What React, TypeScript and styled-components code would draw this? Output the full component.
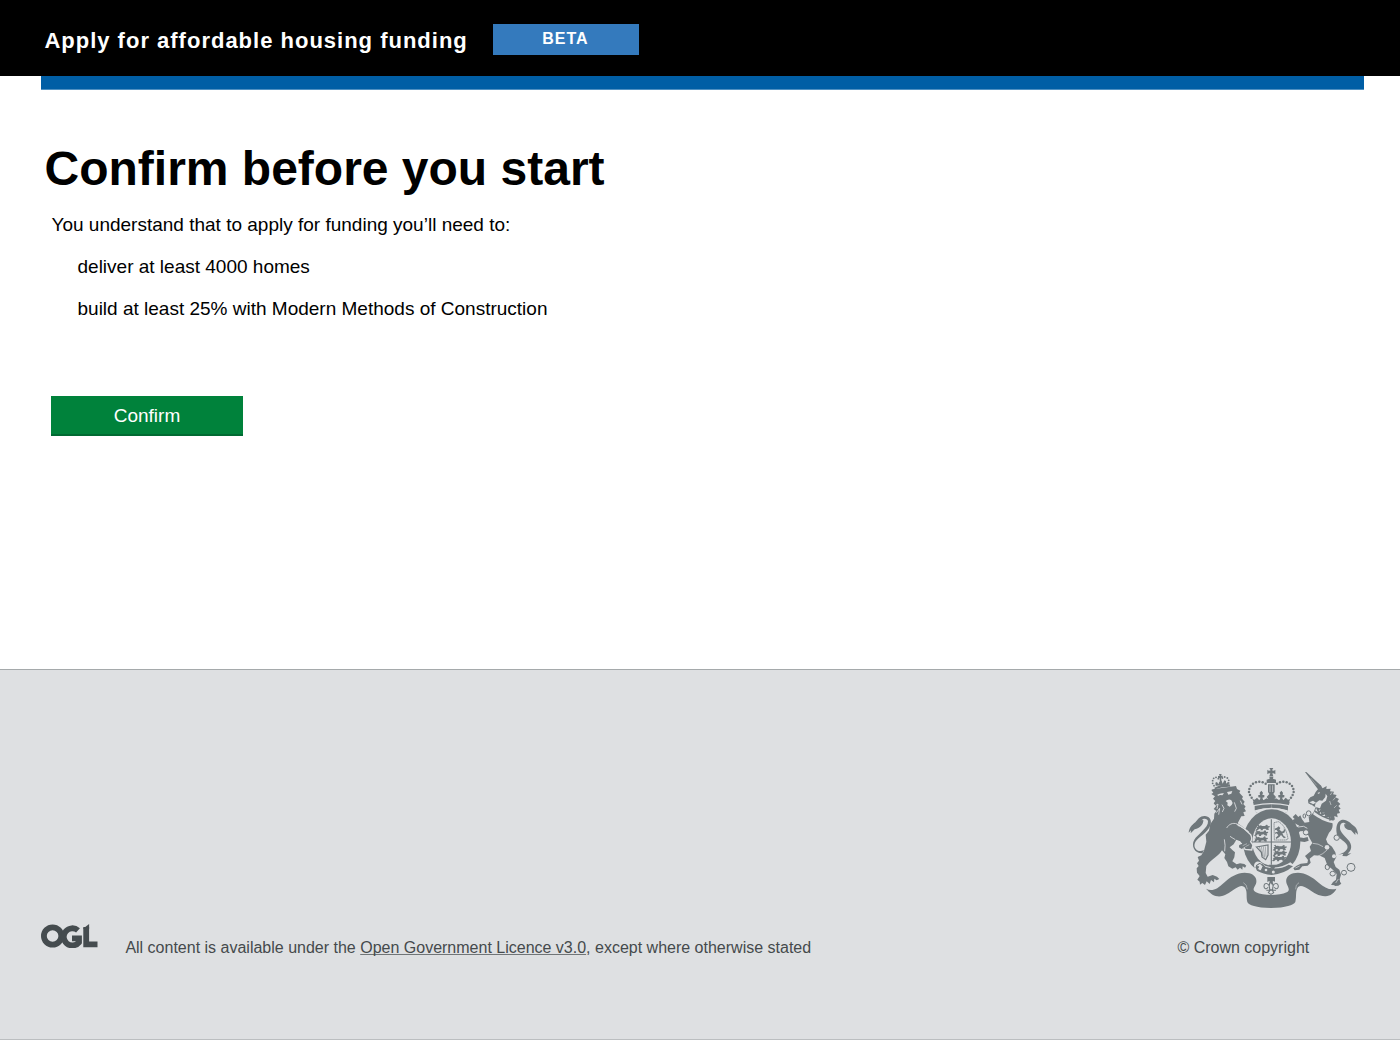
import React from "react";
import styled, { createGlobalStyle } from "styled-components";

const GlobalStyle = createGlobalStyle`
  *, *::before, *::after { box-sizing: border-box; }
  body {
    margin: 0;
    background: #ffffff;
    color: #000000;
    font-family: "Liberation Sans", Arial, Helvetica, sans-serif;
  }
`;

const Page = styled.div`
  display: flex;
  flex-direction: column;
  height: 1041px;
`;

const Header = styled.header`
  display: flex;
  align-items: flex-start;
  height: 76px;
  padding: 24px 0 0 44.4px;
  background: #000000;
  color: #ffffff;
`;

const ServiceName = styled.span`
  width: 448.6px;
  padding-top: 4px;
  font-size: 22px;
  line-height: 26px;
  font-weight: 700;
  letter-spacing: 1px;
  white-space: nowrap;
`;

const PhaseTag = styled.strong`
  width: 146px;
  height: 31px;
  padding-right: 1px;
  background: #347abd;
  font-size: 16px;
  line-height: 29px;
  letter-spacing: 1px;
  text-align: center;
`;

const BlueBar = styled.div`
  height: 14px;
  margin: 0 36px 0 41px;
  background: #005ea5;
  border-bottom: 1px solid #4f90c2;
`;

const Main = styled.main`
  flex: 1;
  padding: 51px 44.5px 0;
`;

const Title = styled.h1`
  margin: 0;
  font-size: 48px;
  line-height: 56px;
  font-weight: 700;
`;

const Intro = styled.p`
  margin: 17px 0 0 7px;
  font-size: 19px;
  line-height: 22px;
`;

const Requirements = styled.ul`
  display: flex;
  flex-direction: column;
  gap: 20px;
  margin: 20px 0 0 33px;
  padding: 0;
  list-style: none;
  font-size: 19px;
  line-height: 22px;
`;

const ConfirmButton = styled.button`
  display: block;
  width: 192px;
  height: 40px;
  margin: 76px 0 0 6.5px;
  padding: 1px 0 0;
  border: 0;
  border-bottom: 2px solid #006a32;
  background: #00823b;
  color: #ffffff;
  font-family: inherit;
  font-size: 19px;
  line-height: 37px;
`;

const Footer = styled.footer`
  display: flex;
  align-items: flex-end;
  height: 371px;
  margin-bottom: 1px;
  padding: 0 0 82px 41px;
  border-top: 1px solid #a5a9ab;
  border-bottom: 1px solid #bbbec0;
  background: #dee0e2;
  color: #454a4c;
  font-size: 16px;
  line-height: 18px;
`;

const Licence = styled.p`
  flex: 1;
  margin: 0 0 0 27.4px;
`;

const LicenceLink = styled.a`
  color: inherit;
  text-decoration: underline;
  text-decoration-color: #707577;
  text-decoration-thickness: 1px;
  text-underline-offset: 1px;
  text-decoration-skip-ink: none;
`;

const Copyright = styled.div`
  display: flex;
  flex-direction: column;
  width: 222.6px;
  gap: 24px;
`;

const LogoSvg = styled.svg`
  display: block;
  flex: none;
  margin-bottom: 9px;
`;

const CrestSvg = styled.svg`
  display: block;
  margin-left: 2.6px;
`;

const INK = "#6f777b";
const PAPER = "#dee0e2";

function OglLogo() {
  return (
    <LogoSvg width="57" height="24" viewBox="0 0 57 24" fill="none" aria-label="Open Government Licence">
      <g stroke="#454c4f" strokeWidth="5.8">
        <circle cx="11.6" cy="12" r="8.7" />
        <path d="M37 6.4A8.6 8.6 0 1 0 38 18.3V14.4H31" />
        <path d="M45.2 3V20.4H56.5" />
      </g>
      <path d="M42.3 4.6L48.1 0V5H42.3Z" fill="#454c4f" />
    </LogoSvg>
  );
}

const imperialArch = [
  [248, 67], [238, 65], [228, 67], [219, 71], [212, 78], [208, 87], [207, 96], [210, 105], [215, 113], [257, 71],
];
const smallCrownPearls = [
  [98, 62], [98, 70], [102, 77], [101, 55], [108, 52], [115, 56], [127, 54], [134, 51], [142, 54], [146, 61], [146, 69],
];

/* A passant lion as used in the quarters of the shield. */
function TinyLion({ x, y }: { x: number; y: number }) {
  return (
    <path
      transform={`translate(${x} ${y})`}
      d="M0 0l5-3 3 4 5-1 3 2h9l4-4 4 1v4l5-1 2 3-6 3 3 3-2 3-6-1-3-3-7 1-1 4h-7l2-4-5-1-5 5-6-1 5-6-3-3 6-1-2-3z"
    />
  );
}

function Crest() {
  return (
    <CrestSvg width="185" height="155" viewBox="0 0 555 465" fill={INK} aria-label="Royal coat of arms">
      {/* Motto ribbon */}
      <path d="M78 386C96 396 112 387 132 368C154 348 180 333 208 340C226 345 232 358 228 371C224 382 214 388 228 397C249 408 298 408 320 397C332 390 324 382 320 371C315 357 323 345 340 340C368 333 394 349 416 368C434 383 450 392 469 386C463 400 451 407 437 409C418 410 401 398 386 388C372 379 358 373 352 385C346 397 350 410 346 426C340 436 318 443 273 444C228 443 206 436 202 426C198 410 202 398 197 387C190 373 178 378 163 388C147 399 132 411 112 409C98 407 88 397 78 386Z" />
      <path d="M190 368Q201 373 202 388M357 368Q346 373 347 388" fill="none" stroke={PAPER} strokeWidth="1.5" />

      {/* Lion */}
      <path d="M98 88L168 78L171 87L181 92L178 98L189 110L186 116L194 125L190 132L197 140L193 145L198 154L190 157L194 168L184 169L173 190C188 199 195 208 207 219L212 232L206 249L211 256L207 263L202 258L198 266L193 260L186 266L184 260L177 262L178 255L188 252L181 244L169 239L161 253L149 262L157 270L165 277L163 292L157 304L170 313L180 310L193 312L199 317L195 323L188 319L187 329L180 323L173 329L167 322L157 326L145 319L141 306L133 294L136 283L126 271C118 285 99 297 87 308L79 318L77 339L83 350L98 345L111 350L118 357L110 361L103 356L102 367L93 360L89 372L80 364L75 375L67 369L60 374L59 365L52 359L59 348L51 338L50 325L56 318L51 310L57 302L53 291L64 286L72 272L79 245L77 224L87 212L91 192L102 176L103 161L109 153L101 147L108 139L101 130L106 123L99 116L105 109L94 102L100 98L94 90Z" />
      <g fill={PAPER}>
        <path d="M112 104Q121 98 132 100L127 106Q119 104 114 108Z" />
        <path d="M141 96L157 93L154 101L145 104Z" />
        <path d="M142 120Q148 116 154 121L158 129Q155 138 149 140L142 136L143 128L137 123Z" />
      </g>
      <g fill="none" stroke={PAPER} strokeWidth="2.5">
        <path d="M106 137L114 132L111 147M109 158L119 145L116 164M126 134L132 145L127 156M181 122L186 133M163 127L169 145L164 155" />
        <path d="M133 238Q137 256 134 274M171 192C158 187 146 193 140 204M150 229Q159 235 166 239" />
      </g>
      <path d="M72 270C55 280 40 265 44 251C48 236 73 225 87 204C98 187 93 170 75 168C61 167 53 178 46 187C35 196 27 204 26 218L33 211L32 220L44 208C60 204 71 193 70 180L64 181C70 173 83 175 84 184C86 203 51 225 43 239C32 257 44 281 67 280Z" />

      {/* Lion's crown */}
      <path d="M103 83Q126 71 149 73L151 80Q125 79 105 88Z" />
      <g fill={INK}>
        {smallCrownPearls.map(([x, y]) => <circle key={`${x}-${y}`} cx={x} cy={y} r="2.8" />)}
      </g>
      <path d="M117 42H125L123 47H128V53H123L126 72H120L119 54H114V48H119ZM107 77L106 68L111 66L115 73L118 65L125 63L128 71L133 61L138 63L138 71L143 66L145 75Z" />

      {/* Imperial crown */}
      {[1, -1].map((side) => (
        <g key={side} transform={side === 1 ? undefined : "translate(548 0) scale(-1 1)"}>
          {imperialArch.map(([x, y]) => <circle key={`${x}-${y}`} cx={x} cy={y} r="3.7" />)}
          <path d="M222 128L217 117L224 119L231 113L238 121L242 113L235 112V105L240 105L239 98L244 92L249 98L247 105L253 105V112L247 113L250 121L260 115L269 120V128Z" />
          <path d="M224 138Q222 150 229 160C241 149 259 147 274 147V133Q245 133 224 138Z" />
        </g>
      ))}
      <path d="M268 24H280L276 31Q282 34 286 29V43Q281 38 277 40L280 49H268L271 40Q266 38 262 43V29Q266 34 272 31ZM268 50H280L279 56L288 59V69H260V59L269 56Z" />
      <path d="M264 73H284V96L280 102L288 111L283 118L288 124H260L265 118L260 111L268 102L264 96Z" />
      <path d="M270 76V96M278 76V96" stroke={PAPER} strokeWidth="2" />
      <path d="M220 130Q274 118 328 130" fill="none" stroke={INK} strokeWidth="10" />
      <path d="M230 154Q274 139 318 154" fill="none" stroke={PAPER} strokeWidth="7" />
      <path d="M226 159Q274 144 322 159L323 151Q274 137 225 151Z" fill={PAPER} />

      {/* Garter and shield */}
      <ellipse cx="275" cy="246" rx="86" ry="98" />
      <ellipse cx="275" cy="246" rx="58" ry="71" fill={PAPER} />
      <path d="M274 178V314M216 246H333" stroke={INK} strokeWidth="3.4" />
      <TinyLion x={230} y={196} /><TinyLion x={225} y={213} /><TinyLion x={224} y={231} />
      <TinyLion x={281} y={257} /><TinyLion x={281} y={273} /><TinyLion x={279} y={289} />
      <path d="M282 188L295 185Q318 197 324 237L318 240H283Z" fill="none" stroke={INK} strokeWidth="2.2" strokeDasharray="5 1" />
      <path d="M291 203L296 199L301 204L298 209L306 215L312 211L311 205L316 211L313 218L307 220L311 228L318 232L312 235L303 225L298 231L289 237L287 233L295 226L290 220L285 222L286 217L294 215L289 209L284 211L286 205Z" />
      <path d="M229 261L264 255V285L257 299L246 291L244 277Z" fill="none" stroke={INK} strokeWidth="3.5" />
      <path d="M238 261L248 288M244 260L250 291M250 259L254 293M256 259L258 290" stroke={INK} strokeWidth="1.5" />

      {/* Buckle and strap */}
      <path d="M222 316Q226 300 242 307L257 318L275 322Q304 325 331 307L345 318Q318 348 274 349Q244 347 225 333Z" fill={PAPER} />
      <path d="M238 309Q250 311 257 321L275 325Q302 328 326 314L339 319Q313 342 275 345Q249 342 231 332L226 321Z" />
      <path d="M266 314H288L282 328L274 326Z" />
      <path d="M240 310L249 319L243 333L232 328L236 320L228 317Z" fill={PAPER} stroke={INK} strokeWidth="3" />
      <circle cx="258" cy="330" r="4" fill={PAPER} /><circle cx="280" cy="336" r="4.5" fill={PAPER} />

      {/* Pendant and lily */}
      <path d="M262 351H285V365L279 363L274 374L268 363L262 366Z" />
      <g fill="none" stroke={INK} strokeWidth="3.2">
        <path d="M273 362Q264 375 270 389H277Q283 374 273 362ZM269 389C270 368 252 365 252 379C252 386 259 390 264 382M278 389C277 368 294 365 295 379C295 386 288 390 283 382M259 391H288M270 391L265 398L273 403L281 398L277 391" />
      </g>

      {/* Lion's forepaw over the garter */}
      <path d="M172 193C190 202 202 215 212 224Q218 236 212 245L219 255L215 270L195 268L193 260" fill="none" stroke={PAPER} strokeWidth="4" />
      <path d="M165 192C184 200 199 215 209 226Q213 236 206 245L213 255L210 266L203 259L199 267L192 260L185 267L177 262L179 255L188 252L180 242L165 235Z" />
      <path d="M170 193Q190 204 206 215M191 184Q185 193 176 198" fill="none" stroke={PAPER} strokeWidth="3" />
      <path d="M188 257L201 251M196 260L208 254" stroke={PAPER} strokeWidth="1.5" />

      {/* Unicorn */}
      <path d="M375 36L379 36L425 79L415 89Z" />
      <path d="M392 54L410 76" stroke={PAPER} strokeWidth="1" />
      <path d="M416 85L421 76L428 85L440 78L439 87L452 86L450 94L462 95L459 103L470 105L466 112L477 117L472 124L481 132L475 138L482 146L476 149L480 159L471 161L473 172L463 168L464 180L454 177C462 198 457 209 447 218L438 238L443 250L456 260L466 277L469 291L461 306L467 321L478 329L483 344L479 358L481 370L468 376L453 375L459 366L468 359L470 342L456 327L442 316L434 294L420 287L402 286L389 296L392 308L383 317L367 319L358 329L344 331L340 325L350 317L362 311L382 309L384 300L375 288L393 273L389 260L397 249L389 235L383 222L376 213L360 214L352 223L358 232L371 234L383 231L386 242L374 246L357 244L341 228L340 216L348 204L358 197L341 188L338 180L344 177L338 171L347 162L355 171L361 166L366 178L374 188L388 186L386 171L400 158L407 142L403 131L393 134L385 130L384 120L391 112L401 107L407 96Z" />
      <g fill={PAPER}>
        <path d="M388 127L399 122L408 128L418 121L427 122L436 111L437 101L442 109L438 122L425 131L420 145L408 142L400 133Z" />
        <path d="M412 99L420 96L417 102Z" />
        <circle cx="441" cy="262" r="7" /><circle cx="462" cy="289" r="6" />
      </g>
      <path d="M393 133Q402 133 407 128L404 141" />
      <g fill="none" stroke={PAPER} strokeWidth="1.8">
        <path d="M456 97L451 105M466 113L459 121M470 136L462 144M449 123L453 135" />
      </g>
      <path d="M409 144L415 150L422 148L427 158L435 158L440 168L450 169L453 179L465 179L460 190C436 187 416 175 399 163Z" fill={PAPER} />
      <path d="M404 153Q430 173 461 180M411 144L417 158L423 150L427 164L436 159L439 171L449 168L450 179L463 176" fill="none" stroke={INK} strokeWidth="5" />
      <path d="M354 201L371 199L382 205" fill="none" stroke={PAPER} strokeWidth="2.5" />
      <path d="M398 250Q415 250 429 260M413 289Q430 282 441 270" fill="none" stroke={PAPER} strokeWidth="2" />
      <path d="M463 378L474 358L484 371L475 377Z" />
      <path d="M467 369L475 357M346 324L359 318" stroke={PAPER} strokeWidth="2" />

      {/* Unicorn's tail and chain */}
      <path d="M472 227C466 208 469 185 484 180C501 176 511 190 523 199C530 204 533 214 534 224L526 216L526 225L513 211C499 210 491 202 493 192L499 193C491 184 481 188 480 200C478 218 497 228 508 244C520 262 510 276 503 281L514 280L500 289L487 288L490 281L475 284C490 278 506 271 502 257C496 242 480 239 472 227Z" />
      <path d="M481 239C492 248 501 264 490 278" fill="none" stroke={PAPER} strokeWidth="1.5" />
      <g fill="none" stroke={INK} strokeWidth="3">
        <ellipse cx="386" cy="160" rx="7" ry="7.5" /><ellipse cx="373" cy="168" rx="4" ry="6" />
        <ellipse cx="442" cy="321" rx="6.5" ry="8" /><ellipse cx="458" cy="341" rx="8" ry="7" />
        <ellipse cx="492" cy="338" rx="7.5" ry="7" /><circle cx="513" cy="322" r="12" />
        <circle cx="378" cy="217" r="8" fill={PAPER} /><circle cx="470" cy="233" r="8" fill={PAPER} />
      </g>
    </CrestSvg>
  );
}

export default function App() {
  return (
    <Page>
      <GlobalStyle />
      <Header>
        <ServiceName>Apply for affordable housing funding</ServiceName>
        <PhaseTag>BETA</PhaseTag>
      </Header>
      <BlueBar />
      <Main>
        <Title>Confirm before you start</Title>
        <Intro>You understand that to apply for funding you’ll need to:</Intro>
        <Requirements>
          <li>deliver at least 4000 homes</li>
          <li>build at least 25% with Modern Methods of Construction</li>
        </Requirements>
        <ConfirmButton type="button">Confirm</ConfirmButton>
      </Main>
      <Footer>
        <OglLogo />
        <Licence>
          All content is available under the <LicenceLink>Open Government Licence v3.0</LicenceLink>, except where
          otherwise stated
        </Licence>
        <Copyright>
          <Crest />
          <span>© Crown copyright</span>
        </Copyright>
      </Footer>
    </Page>
  );
}
